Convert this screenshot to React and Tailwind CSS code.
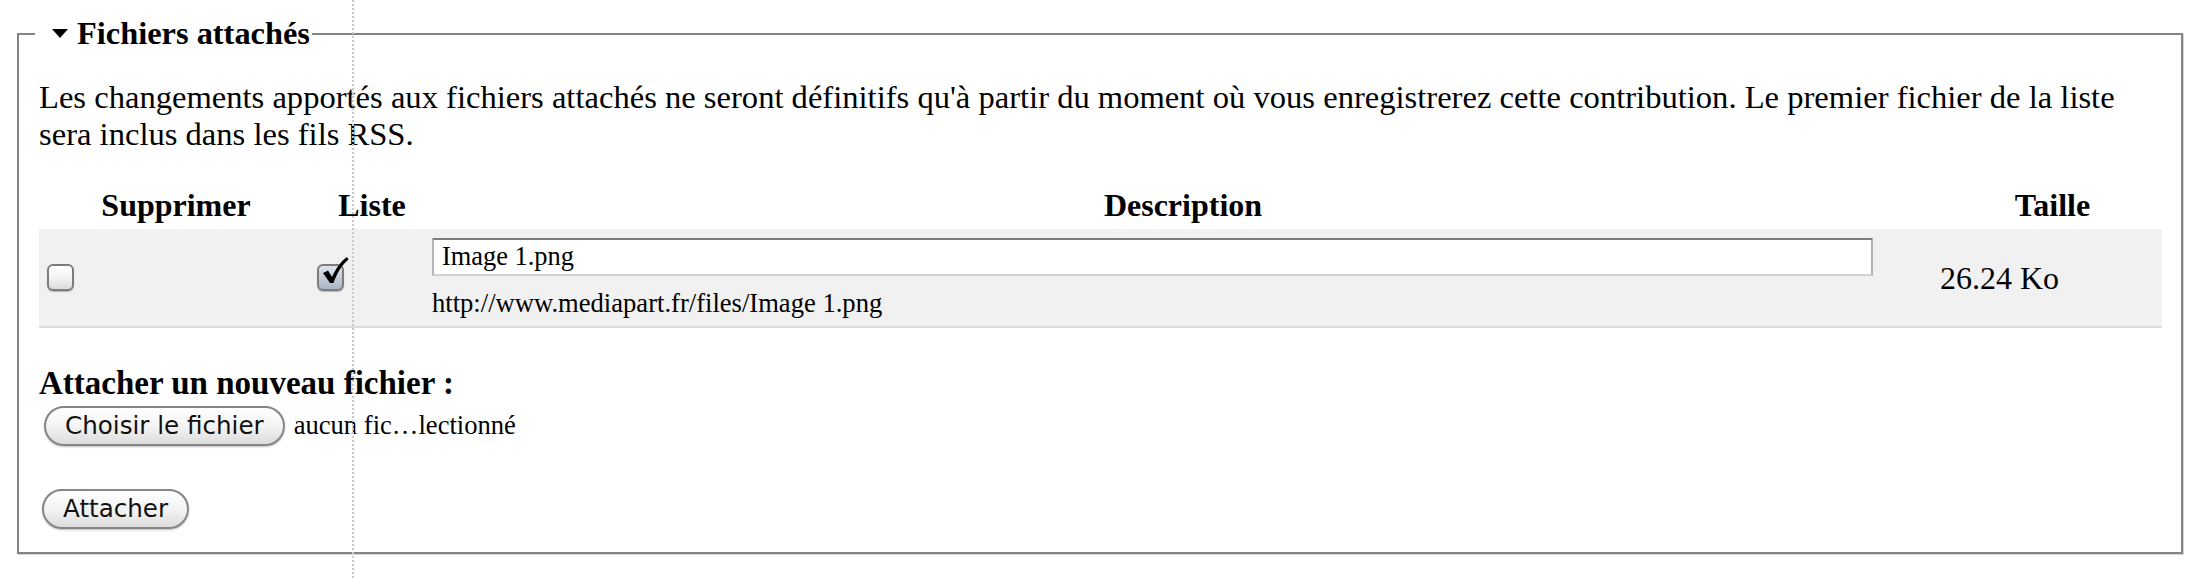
import { useState } from "react";

const serif = "font-['Liberation_Serif','Times_New_Roman',serif]";

function AquaCheckbox({ checked, onChange }) {
  return (
    <button
      type="button"
      onClick={onChange}
      className={`relative block w-[27px] h-[27px] rounded-[6px] border-2 border-[#7c7c7c] shadow-[0_1px_1px_rgba(0,0,0,0.25)] ${
        checked
          ? "bg-gradient-to-b from-[#dfe5ec] to-[#a9b6c6]"
          : "bg-gradient-to-b from-white via-[#f3f3f3] to-[#dcdcdc]"
      }`}
    >
      {checked && (
        <svg
          className="absolute left-[1px] top-[-10px] pointer-events-none"
          width="30"
          height="30"
          viewBox="0 0 30 30"
        >
          <path
            d="M3 17 L8 14.5 L12 21 C16 12 21 5 27 1 L28.5 3.5 C22 9 17 17 13.5 27 L10 27 Z"
            fill="#000"
          />
        </svg>
      )}
    </button>
  );
}

function AquaButton({ children }) {
  return (
    <button
      type="button"
      className="h-[40px] px-[19px] rounded-full border-2 border-[#858585] bg-gradient-to-b from-white via-[#f4f4f4] to-[#dcdcdc] shadow-[0_1px_2px_rgba(0,0,0,0.25)] font-['DejaVu_Sans',sans-serif] text-[24.6px] leading-none text-[#111]"
    >
      {children}
    </button>
  );
}

function App() {
  const [remove, setRemove] = useState(false);
  const [list, setList] = useState(true);
  const [desc, setDesc] = useState("Image 1.png");

  return (
    <div className={`relative min-h-[578px] bg-white pt-[15px] pl-[17px] pr-[17px] text-black ${serif}`}>
      {/* guide line drawn over the page */}
      <div className="absolute top-0 bottom-0 left-[352px] border-l-2 border-dotted border-[#c9c9c9] pointer-events-none z-10" />

      <fieldset className="border-2 border-[#858585] pl-[20px] pr-[19px] pb-[23px] shadow-[1px_1px_0_#d4d4d4]">
        <legend className="-ml-[4px] pl-[17px] pr-[2px]">
          <span className="flex items-center gap-[9px] text-[32.4px] leading-[37px] font-bold">
            <svg width="16" height="9" viewBox="0 0 16 9">
              <path d="M0 0 H16 L8 9 Z" fill="#000" />
            </svg>
            Fichiers attachés
          </span>
        </legend>

        <p className="mt-[27px] mb-[29px] text-[32.6px] leading-[37px]">
          Les changements apportés aux fichiers attachés ne seront définitifs qu'à partir du moment où vous
          enregistrerez cette contribution. Le premier fichier de la liste sera inclus dans les fils RSS.
        </p>

        <table className="w-full table-fixed border-collapse">
          <colgroup>
            <col className="w-[274px]" />
            <col className="w-[118px]" />
            <col />
            <col className="w-[227px]" />
          </colgroup>
          <thead>
            <tr className="text-[32px] leading-[37px] font-bold">
              <th className="py-[5px] text-center">Supprimer</th>
              <th className="py-[5px] text-center">Liste</th>
              <th className="py-[5px] text-center">Description</th>
              <th className="py-[5px] pl-[8px] text-center">Taille</th>
            </tr>
          </thead>
          <tbody>
            <tr className="bg-[#f1f1f1] border-b-2 border-[#dcdcdc]">
              <td className="pl-[8px] align-middle">
                <AquaCheckbox checked={remove} onChange={() => setRemove(!remove)} />
              </td>
              <td className="pl-[4px] align-middle">
                <AquaCheckbox checked={list} onChange={() => setList(!list)} />
              </td>
              <td className="pl-[1px] pt-[9px] pb-[8px]">
                <input
                  value={desc}
                  onChange={(e) => setDesc(e.target.value)}
                  className="block w-[1441px] h-[38px] bg-white border-2 border-t-[#7d7d7d] border-x-[#b4b4b4] border-b-[#d2d2d2] pl-[8px] text-[26.4px] outline-none"
                />
                <div className="mt-[12px] text-[26.6px] leading-[30px]">http://www.mediapart.fr/files/Image 1.png</div>
              </td>
              <td className="pl-[5px] align-middle text-[32px]">26.24 Ko</td>
            </tr>
          </tbody>
        </table>

        <div className="mt-[36px] text-[33px] leading-[39px] font-bold">Attacher un nouveau fichier :</div>
        <div className="mt-[3px] ml-[5px] flex items-center gap-[9px]">
          <AquaButton>Choisir le fichier</AquaButton>
          <span className="text-[26.6px]">aucun fic…lectionné</span>
        </div>
        <div className="mt-[43px] ml-[3px]">
          <AquaButton>Attacher</AquaButton>
        </div>
      </fieldset>
    </div>
  );
}

export default App;
